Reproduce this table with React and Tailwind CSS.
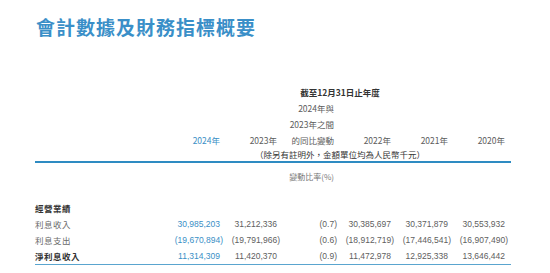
const rows = [
  {
    label: "利息收入",
    values: ["30,985,203", "31,212,336", "(0.7)", "30,385,697", "30,371,879", "30,553,932"],
  },
  {
    label: "利息支出",
    values: ["(19,670,894)", "(19,791,966)", "(0.6)", "(18,912,719)", "(17,446,541)", "(16,907,490)"],
  },
  {
    label: "淨利息收入",
    bold: true,
    values: ["11,314,309", "11,420,370", "(0.9)", "11,472,978", "12,925,338", "13,646,442"],
  },
];

const Cell = ({ value, blue }) => {
  const neg = value.endsWith(")");
  return (
    <div
      className={`text-right font-['Liberation_Sans_Narrow','Liberation_Sans',sans-serif] text-[8.5px] leading-[16px] ${
        blue ? "text-[#3a8fc6]" : "text-[#606060]"
      }`}
    >
      {neg ? (
        <>
          {value.slice(0, -1)}
          <span className="mr-[-3px]">)</span>
        </>
      ) : (
        value
      )}
    </div>
  );
};

const App = () => {
  return (
    <div className="w-[550px] h-[273px] bg-white overflow-hidden font-['Noto_Sans_CJK_TC','Noto_Sans_CJK_SC',sans-serif]">
      <h1 className="pl-[36px] pt-[17px] text-[19px] leading-[20px] font-bold tracking-[1px] text-[#3a8fc8]">
        會計數據及財務指標概要
      </h1>

      <div className="ml-[35px] mt-[47px] w-[476px] pr-[6px]">
        <div className="grid grid-cols-[128px_repeat(6,57px)] text-[8.5px] leading-[16px] text-[#5c5c5c]">
          <div className="col-start-2 col-span-6 pl-[12px] text-center font-bold text-[#333]">
            截至12月31日止年度
          </div>

          <div className="col-start-4 text-right">2024年與</div>
          <div className="col-start-4 text-right">2023年之間</div>

          <div className="col-start-2 text-right text-[#3a8fc6]">2024年</div>
          <div className="text-right">2023年</div>
          <div className="text-right">的同比變動</div>
          <div className="text-right">2022年</div>
          <div className="text-right">2021年</div>
          <div className="text-right">2020年</div>

          <div className="col-start-2 col-span-6 pl-[12px] text-center leading-[13px] text-[#333]">
            （除另有註明外，金額單位均為人民幣千元）
          </div>
        </div>
        <div className="mr-[-6px] h-[1.5px] bg-[#2e8bc2]" />

        <div className="grid grid-cols-[128px_repeat(6,57px)] pt-[7px]">
          <div className="col-start-4 text-right text-[8px] leading-[14px] text-[#777]">變動比率(%)</div>
        </div>

        <div className="grid grid-cols-[128px_repeat(6,57px)] pt-[16px]">
          <div className="col-span-7 text-[8.5px] leading-[16px] font-bold tracking-[0.5px] text-[#333]">
            經營業績
          </div>
          {rows.map((row) => (
            <div key={row.label} className="contents">
              <div
                className={`text-[8.5px] leading-[16px] tracking-[0.5px] ${
                  row.bold ? "font-bold text-[#333]" : "text-[#6a6a6a]"
                }`}
              >
                {row.label}
              </div>
              {row.values.map((v, i) => (
                <Cell key={i} value={v} blue={i === 0} />
              ))}
            </div>
          ))}
        </div>
        <div className="mr-[-6px] h-px bg-[#5aa5cf]" />
      </div>
    </div>
  );
};

export default App;
